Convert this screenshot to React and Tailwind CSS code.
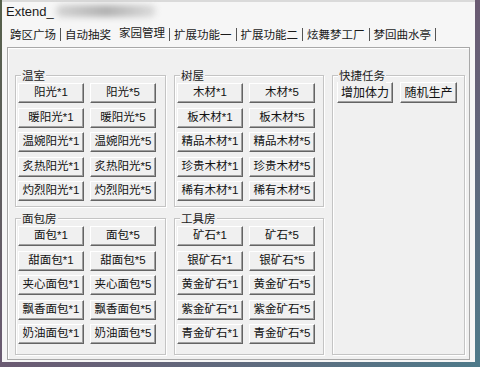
import { Fragment } from 'react';

const tabs = ['跨区广场', '自动抽奖', '家园管理', '扩展功能一', '扩展功能二', '炫舞梦工厂', '梦回曲水亭'];

const groups = [
    { title: '温室', items: ['阳光', '暖阳光', '温婉阳光', '炙热阳光', '灼烈阳光'] },
    { title: '树屋', items: ['木材', '板木材', '精品木材', '珍贵木材', '稀有木材'] },
    { title: '面包房', items: ['面包', '甜面包', '夹心面包', '飘香面包', '奶油面包'] },
    { title: '工具房', items: ['矿石', '银矿石', '黄金矿石', '紫金矿石', '青金矿石'] },
];

function Btn({ children, className = '' }) {
    return (
        <button className={`flex items-center justify-center bg-[#f0f0f0] border border-t-white border-l-white border-r-[#646464] border-b-[#646464] shadow-[inset_-1px_-1px_0_#a0a0a0] text-[#111] leading-none whitespace-nowrap ${className}`}>
            {children}
        </button>
    );
}

function Group({ title, children, className = '' }) {
    return (
        <div className={`relative border border-[#c4c4c4] shadow-[inset_1px_1px_0_#fff,1px_1px_0_#fff] ${className}`}>
            <span className="absolute -top-[7px] left-[5px] bg-[#f0f0f0] px-[1px] text-[11.5px] leading-[14px] text-[#222]">{title}</span>
            {children}
        </div>
    );
}

function ItemGroup({ group }) {
    return (
        <Group title={group.title} className="pt-[7px] pl-[2px]">
            <div className="grid grid-cols-[66px_66px] gap-x-[6px] gap-y-[4.5px]">
                {group.items.map((name) => (
                    <Fragment key={name}>
                        <Btn className="h-[20px] text-[11.5px]">{name}*1</Btn>
                        <Btn className="h-[20px] text-[11.5px]">{name}*5</Btn>
                    </Fragment>
                ))}
            </div>
        </Group>
    );
}

export default function App() {
    return (
        <div className="w-[480px] h-[367px] overflow-hidden bg-linear-to-br from-[#55604a] via-[#6a5a72] to-[#4d7a8a] font-['Liberation_Sans','Noto_Sans_CJK_SC',sans-serif]">
            <div className="ml-[2px] w-[473px] h-[362px] bg-[#f6f6f6] flex flex-col">
                {/* Title bar */}
                <div className="h-[20px] flex items-center pl-[4px] border-t-2 border-[#dadada]">
                    <span className="text-[13px] text-[#1a1a1a] leading-none">Extend_</span>
                    <div className="ml-[2px] w-[100px] h-[12px] rounded-full bg-linear-to-r from-[#d4d4d4] via-[#b0b0b0] to-[#dcdcdc] blur-[3px]" />
                </div>

                {/* Tabs */}
                <div className="h-[27px] flex items-start pl-[4px] pt-[8px] text-[11.5px] text-[#1a1a1a]">
                    {tabs.map((t, i) => (
                        <div key={t} className="flex items-start">
                            <span className={`px-[4px] h-[14px] leading-[14px] ${i === 2 ? '-mt-[2px]' : ''}`}>{t}</span>
                            {i !== 1 && <span className="w-px h-[13px] bg-[#555]" />}
                        </div>
                    ))}
                </div>

                {/* Panel */}
                <div className="mx-[5px] h-[313px] border border-[#a8a8a8] shadow-[inset_1px_1px_0_#fff] bg-[#f0f0f0] pt-[27px] pl-[7px] pb-[4px] grid grid-cols-[151px_150px_133px] grid-rows-[132px_137px] gap-x-[8px] gap-y-[11px]">
                    <ItemGroup group={groups[0]} />
                    <ItemGroup group={groups[1]} />
                    <Group title="快捷任务" className="row-span-2 pt-[6px] pl-[4px]">
                        <div className="flex gap-[7px]">
                            <Btn className="w-[56px] h-[21px] text-[12px]">增加体力</Btn>
                            <Btn className="w-[57px] h-[21px] text-[12px]">随机生产</Btn>
                        </div>
                    </Group>
                    <ItemGroup group={groups[2]} />
                    <ItemGroup group={groups[3]} />
                </div>
            </div>
        </div>
    );
}
